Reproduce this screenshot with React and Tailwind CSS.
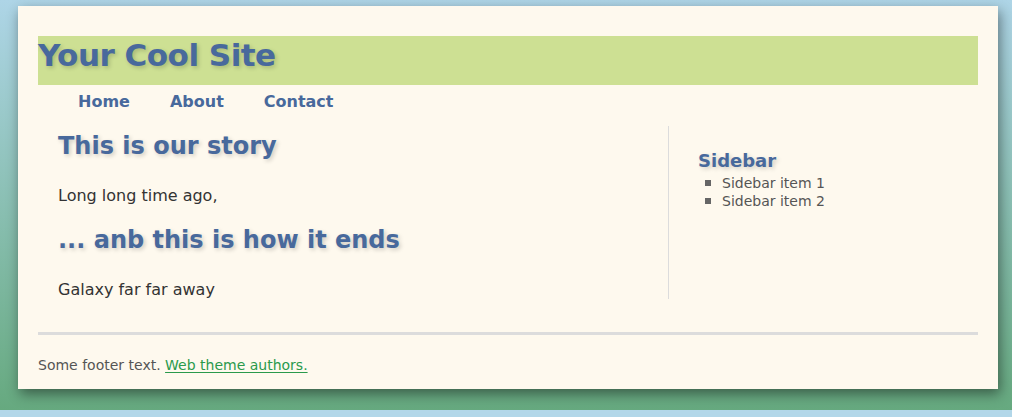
export default function App() {
  const font = { fontFamily: '"DejaVu Sans", Verdana, sans-serif' };
  const heading = "text-[#48699c] font-bold [text-shadow:2px_2px_4px_rgba(0,0,0,0.18)]";
  return (
    <div className="h-[417px] bg-[#b2d7e9] overflow-hidden" style={font}>
      <div className="h-[410px] bg-linear-to-b from-[#aed5e7] to-[#66a97f] pt-[6px] pl-[18px]">
        <div className="w-[980px] h-[383px] bg-[#fef9ee] shadow-[2px_5px_12px_rgba(0,0,0,0.45)] pt-[30px] px-[20px]">
          <header className="h-[49px] bg-[#cde093] flex items-start">
            <h1 className={`${heading} text-[31px] leading-[36px] tracking-[-0.5px] mt-[1px]`}>Your Cool Site</h1>
          </header>
          <nav className="h-[32px] flex items-center pl-[40px] gap-[40px] pt-[1px]">
            <a className="text-[#48699c] font-bold text-[16px] leading-none">Home</a>
            <a className="text-[#48699c] font-bold text-[16px] leading-none">About</a>
            <a className="text-[#48699c] font-bold text-[16px] leading-none">Contact</a>
          </nav>
          <div className="mt-[9px] flex h-[173px]">
            <div className="w-[630px] px-[20px]">
              <h2 className={`${heading} text-[24px] leading-[30px] mt-[5px]`}>This is our story</h2>
              <p className="text-[#333] text-[16px] leading-[24px] mt-[23px]">Long long time ago,</p>
              <h2 className={`${heading} text-[24px] leading-[30px] mt-[17px]`}>... anb this is how it ends</h2>
              <p className="text-[#333] text-[16px] leading-[24px] mt-[23px]">Galaxy far far away</p>
            </div>
            <aside className="flex-1 border-l border-[#dcdcdc] pl-[29px]">
              <h3 className={`${heading} text-[18px] leading-[22px] mt-[24px]`}>Sidebar</h3>
              <ul className="mt-[2px]">
                {["Sidebar item 1", "Sidebar item 2"].map((t) => (
                  <li key={t} className="flex items-center text-[#555] text-[14px] leading-[18px]">
                    <span className="w-[6px] h-[6px] bg-[#666] ml-[7px] mr-[11px]" />
                    {t}
                  </li>
                ))}
              </ul>
            </aside>
          </div>
          <div className="mt-[33px] h-[3px] bg-[#dcdcdc]" />
          <p className="mt-[20px] text-[#555] text-[14px] leading-[20px]">
            Some footer text.{" "}
            <a className="text-[#2a9a4c] underline underline-offset-2">Web theme authors.</a>
          </p>
        </div>
      </div>
    </div>
  );
}
